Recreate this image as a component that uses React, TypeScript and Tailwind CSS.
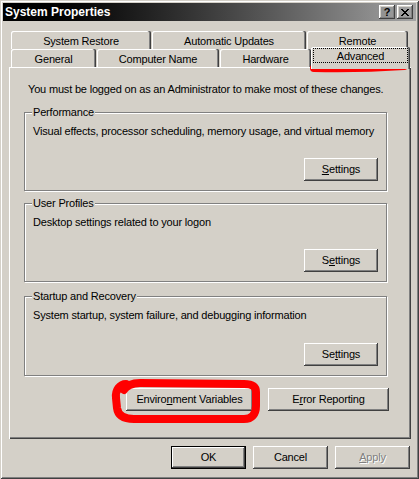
import React from 'react';

// classic 3D bevel for push buttons
const bevel =
  'shadow-[inset_-1px_-1px_0_#404040,inset_1px_1px_0_#ffffff,inset_-2px_-2px_0_#808080,inset_2px_2px_0_#d4d0c8]';

type BtnProps = {
  children: React.ReactNode;
  className?: string;
  isDefault?: boolean;
  disabled?: boolean;
};

const Button = ({ children, className = '', isDefault = false, disabled = false }: BtnProps) => (
  <button
    type="button"
    className={`flex h-[23px] items-center justify-center bg-[#d4d0c8] ${
      disabled ? 'text-[#808080] [text-shadow:1px_1px_0_#ffffff]' : 'text-black'
    } ${
      isDefault
        ? 'border border-black shadow-[inset_-1px_-1px_0_#404040,inset_1px_1px_0_#ffffff,inset_-2px_-2px_0_#808080]'
        : bevel
    } ${className}`}
  >
    {children}
  </button>
);

const Tab = ({ label, w }: { label: string; w: string }) => (
  <div
    className={`flex h-[18px] items-center justify-center rounded-t-[2px] bg-[#d4d0c8] pt-[3px] shadow-[inset_-1px_0_0_#404040,inset_-2px_0_0_#808080,inset_1px_1px_0_#ffffff] ${w}`}
  >
    {label}
  </div>
);

type GroupProps = {
  title: string;
  desc: string;
  button: React.ReactNode;
  className?: string;
};

const Group = ({ title, desc, button, className = '' }: GroupProps) => (
  <div
    className={`relative flex w-[363px] flex-col border border-[#808080] shadow-[inset_1px_1px_0_#ffffff,1px_1px_0_#ffffff] ${className}`}
  >
    <span className="absolute -top-[7px] left-[7px] bg-[#d4d0c8] px-[1px]">{title}</span>
    <p className="ml-[8px] mt-[12px]">{desc}</p>
    <div className="mb-[9px] mr-[8px] mt-auto self-end">{button}</div>
  </div>
);

const CloseGlyph = () => (
  <svg width="8" height="7" viewBox="0 0 8 7" shapeRendering="crispEdges">
    <path
      d="M0 0h2v1H0zM6 0h2v1H6zM1 1h2v1H1zM5 1h2v1H5zM2 2h4v1H2zM3 3h2v1H3zM2 4h4v1H2zM1 5h2v1H1zM5 5h2v1H5zM0 6h2v1H0zM6 6h2v1H6z"
      fill="#000"
    />
  </svg>
);

export default function App() {
  return (
    <div className="relative flex h-[479px] w-[419px] flex-col whitespace-nowrap bg-[#d4d0c8] p-[3px] font-['Liberation_Sans',Arial,sans-serif] text-[11px] leading-[13px] tracking-[-0.18px] text-black shadow-[inset_1px_1px_0_#d4d0c8,inset_-1px_-1px_0_#404040,inset_2px_2px_0_#ffffff,inset_-2px_-2px_0_#808080]">
      {/* title bar */}
      <div className="flex h-[18px] items-center bg-gradient-to-r from-black to-[#a4a4a4] pl-[2px] pr-[3px]">
        <span className="text-[12px] font-bold tracking-normal text-white">System Properties</span>
        <div className="ml-auto flex gap-[2px]">
          <div className={`flex h-[14px] w-[16px] items-center justify-center font-bold leading-none ${bevel}`}>
            ?
          </div>
          <div className={`flex h-[14px] w-[16px] items-center justify-center ${bevel}`}>
            <CloseGlyph />
          </div>
        </div>
      </div>

      {/* tabs */}
      <div className="mt-[10px] flex flex-col">
        <div className="ml-[8px] flex gap-[1px]">
          <Tab label="System Restore" w="w-[140px]" />
          <Tab label="Automatic Updates" w="w-[154px]" />
          <Tab label="Remote" w="w-[101px]" />
        </div>
        <div className="ml-[8px] flex gap-[1px]">
          <Tab label="General" w="w-[85px]" />
          <Tab label="Computer Name" w="w-[122px]" />
          <Tab label="Hardware" w="w-[91px]" />
          <div className="relative z-10 -mb-[2px] -ml-[1px] -mt-[2px] flex h-[22px] w-[99px] justify-center rounded-t-[2px] bg-[#d4d0c8] pt-[1px] shadow-[inset_-1px_0_0_#404040,inset_-2px_0_0_#808080,inset_1px_1px_0_#ffffff]">
            <span className="flex h-[15px] w-[95px] items-center justify-center border border-dotted border-black pt-[1px]">
              Advanced
            </span>
          </div>
        </div>
      </div>

      {/* tab page */}
      <div className="ml-[6px] flex h-[372px] w-[402px] flex-col pl-[15px] pt-[16px] shadow-[inset_1px_1px_0_#ffffff,inset_-1px_-1px_0_#404040,inset_-2px_-2px_0_#808080]">
        <p className="ml-[4px]">You must be logged on as an Administrator to make most of these changes.</p>

        <Group
          className="mt-[16px] h-[79px]"
          title="Performance"
          desc="Visual effects, processor scheduling, memory usage, and virtual memory"
          button={
            <Button className="w-[74px]">
              <span><u>S</u>ettings</span>
            </Button>
          }
        />
        <Group
          className="mt-[12px] h-[79px]"
          title="User Profiles"
          desc="Desktop settings related to your logon"
          button={
            <Button className="w-[74px]">
              <span>S<u>e</u>ttings</span>
            </Button>
          }
        />
        <Group
          className="mt-[14px] h-[80px]"
          title="Startup and Recovery"
          desc="System startup, system failure, and debugging information"
          button={
            <Button className="w-[74px]">
              <span>Se<u>t</u>tings</span>
            </Button>
          }
        />

        <div className="mr-[22px] mt-[12px] flex justify-end gap-[15px]">
          <Button className="w-[127px]">
            <span>Enviro<u>n</u>ment Variables</span>
          </Button>
          <Button className="w-[121px]">
            <span>E<u>r</u>ror Reporting</span>
          </Button>
        </div>
      </div>

      {/* dialog buttons */}
      <div className="mr-[6px] mt-[7px] flex justify-end gap-[7px]">
        <Button isDefault className="w-[75px]">OK</Button>
        <Button className="w-[75px]">Cancel</Button>
        <Button disabled className="w-[75px]">
          <span><u>A</u>pply</span>
        </Button>
      </div>

      {/* red marker scribbles */}
      <svg className="pointer-events-none absolute inset-0" width="419" height="479" viewBox="0 0 419 479">
        <path d="M314 68 Q360 69 404 66" stroke="#ff0000" strokeWidth="8" strokeLinecap="round" fill="none" />
        <path
          d="M126 384 C120 384 115 390 116 398 L117 408 C118 416 124 419 134 419 L244 419 C252 419 256 414 256 406 L256 392 C256 386 252 384 244 384 L140 383 C132 383 126 386 124 390"
          stroke="#ff0000"
          strokeWidth="8"
          strokeLinecap="round"
          strokeLinejoin="round"
          fill="none"
        />
      </svg>
    </div>
  );
}
